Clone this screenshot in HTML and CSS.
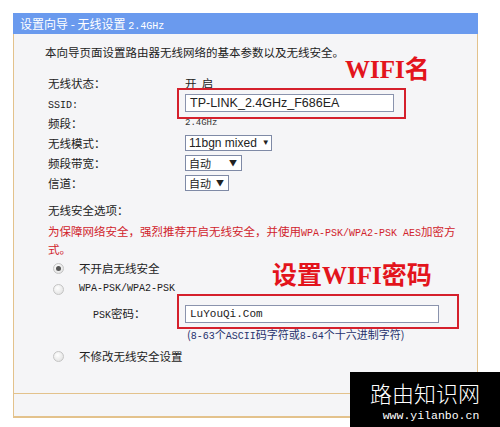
FILE: index.html
```html
<!DOCTYPE html>
<html lang="zh-CN">
<head>
  <meta charset="utf-8">
  <title>设置向导 - 无线设置</title>
  <link rel="stylesheet" href="styles.css">
</head>
<body>
  <div class="page">
    <div class="panel">
      <div class="panel-head">设置向导 - 无线设置 <span class="mono">2.4GHz</span></div>
      <div class="panel-body">
        <p class="intro">本向导页面设置路由器无线网络的基本参数以及无线安全。</p>

        <div class="form">
          <div class="row"><span class="label">无线状态：</span><span class="val">开&nbsp;&nbsp;启</span></div>
          <div class="row">
            <span class="label"><span class="mono">SSID:</span></span>
            <span class="mark mark-ssid"><span class="txt txt-ssid">TP-LINK_2.4GHz_F686EA</span></span>
          </div>
          <div class="row"><span class="label">频段：</span><span class="mono small">2.4GHz</span></div>
          <div class="row"><span class="label">无线模式：</span><span class="sel sel-mode">11bgn mixed <i>▼</i></span></div>
          <div class="row"><span class="label">频段带宽：</span><span class="sel sel-bw">自动 <i>▼</i></span></div>
          <div class="row"><span class="label">信道：</span><span class="sel sel-ch">自动 <i>▼</i></span></div>
        </div>

        <p class="sec-title">无线安全选项：</p>
        <p class="warn">为保障网络安全，强烈推荐开启无线安全，并使用<span class="mono">WPA-PSK/WPA2-PSK AES</span>加密方<br>式。</p>

        <div class="radio-row r1"><span class="radio checked"></span><span>不开启无线安全</span></div>
        <div class="radio-row r2"><span class="radio"></span><span class="mono">WPA-PSK/WPA2-PSK</span></div>
        <div class="psk-row">
          <span class="psk-label"><span class="mono">PSK</span>密码：</span>
          <span class="mark mark-psk"><span class="txt txt-psk">LuYouQi.Com</span></span>
        </div>
        <div class="hint">(<span class="mono">8-63</span>个<span class="mono">ASCII</span>码字符或<span class="mono">8-64</span>个十六进制字符)</div>
        <div class="radio-row r3"><span class="radio"></span><span>不修改无线安全设置</span></div>

        <div class="note note-name">WIFI名</div>
        <div class="note note-pwd">设置WIFI密码</div>
      </div>
      <div class="panel-foot"></div>
    </div>
  </div>

  <div class="watermark">
    <div class="wm-name">路由知识网</div>
    <div class="wm-url">www.yilanbo.cn</div>
  </div>
</body>
</html>
```

FILE: styles.css
```css
body {
  margin: 0;
  background: #fff;
  font-family: "Noto Sans CJK SC", "Liberation Sans", sans-serif;
  font-size: 11.5px;
  color: #222;
}

.page {
  padding: 13px 0 0 13px;
}

.mono {
  font-family: "Liberation Mono", "Noto Sans CJK SC", monospace;
  font-size: 10px;
  line-height: 1;
}

.small {
  font-size: 9px;
  color: #333;
}

.panel {
  width: 463px;
  border: 1px solid #e3c28c;
  border-top: 0;
  background: #f5f5f7;
}

.panel-head {
  height: 21px;
  line-height: 21px;
  margin: 0 -1px;
  padding-left: 7px;
  background: #6a9aee;
  color: #fff;
  font-size: 12px;
}

.panel-body {
  position: relative;
  padding: 9px 0 27px 34px;
}

.intro {
  margin: 0 0 12px -3px;
  line-height: 18px;
}

.row {
  display: flex;
  align-items: center;
  height: 20px;
}

.label {
  width: 137px;
  flex: none;
}

.txt {
  display: inline-block;
  height: 16px;
  line-height: 16px;
  border: 1px solid #8a93ad;
  background: #fff;
  padding-left: 4px;
  font-family: "Liberation Sans", sans-serif;
  font-size: 12.5px;
  color: #222;
}

.txt-ssid {
  width: 203px;
}

.txt-psk {
  width: 248px;
  font-family: "Liberation Mono", monospace;
  font-size: 11px;
}

.mark {
  position: relative;
  display: inline-block;
}

.mark::after {
  content: "";
  position: absolute;
  border: 2px solid #d5202c;
}

.mark-ssid::after {
  left: -8px;
  right: -12px;
  top: -6px;
  bottom: -7px;
}

.mark-psk::after {
  left: -8px;
  right: -20px;
  top: -10px;
  bottom: -6px;
}

.sel {
  display: inline-flex;
  justify-content: space-between;
  align-items: center;
  gap: 5px;
  box-sizing: border-box;
  height: 16px;
  padding: 0 4px 0 3px;
  border: 1px solid #7f8aa6;
  background: #fff;
  font-size: 11px;
  line-height: 14px;
  white-space: nowrap;
}

.sel i {
  font-style: normal;
  font-size: 8px;
}

.sel-mode {
  width: 87px;
  font-family: "Liberation Sans", sans-serif;
  font-size: 12px;
}

.sel-bw {
  width: 57px;
}

.sec-title {
  margin: 8px 0 0;
  line-height: 18px;
}

.warn {
  margin: 3px 0 0;
  line-height: 18px;
  color: #d1242c;
}

.radio-row {
  display: flex;
  align-items: center;
  gap: 15px;
  padding-left: 5px;
  height: 20px;
}

.r2 {
  height: 22px;
}

.r3 {
  margin-top: 2px;
}

.radio {
  width: 11px;
  height: 11px;
  border-radius: 50%;
  border: 1px solid #c4c4c4;
  background: radial-gradient(circle at 40% 35%, #fff, #dcdcdc);
  box-sizing: border-box;
  display: flex;
  align-items: center;
  justify-content: center;
}

.radio.checked::before {
  content: "";
  width: 5px;
  height: 5px;
  border-radius: 50%;
  background: #555;
}

.psk-row {
  display: flex;
  align-items: center;
  height: 22px;
  margin-top: 2px;
}

.psk-label {
  width: 92px;
  padding-left: 45px;
  flex: none;
}

.hint {
  height: 20px;
  line-height: 20px;
  padding-left: 139px;
  color: #26316c;
  font-size: 11px;
}

.note {
  position: absolute;
  color: #e3141c;
  font-family: "Liberation Serif", "Noto Sans CJK SC", serif;
  font-weight: bold;
  font-size: 25px;
  line-height: 28px;
}

.note-name {
  left: 331px;
  top: 22px;
}

.note-pwd {
  left: 258px;
  top: 228px;
}

.panel-foot {
  height: 22px;
  margin: 0 -1px;
  border: 1px solid #e3c28c;
}

.watermark {
  position: fixed;
  right: 0;
  bottom: 0;
  width: 150px;
  height: 55px;
  background: #000;
  color: #fff;
  text-align: center;
  overflow: hidden;
}

.wm-name {
  margin-top: 8px;
  height: 24px;
  font-size: 22px;
  line-height: 24px;
  font-weight: 300;
}

.wm-url {
  margin-top: 5px;
  padding-left: 12px;
  font-family: "Liberation Mono", monospace;
  font-size: 11.5px;
  line-height: 14px;
}
```
